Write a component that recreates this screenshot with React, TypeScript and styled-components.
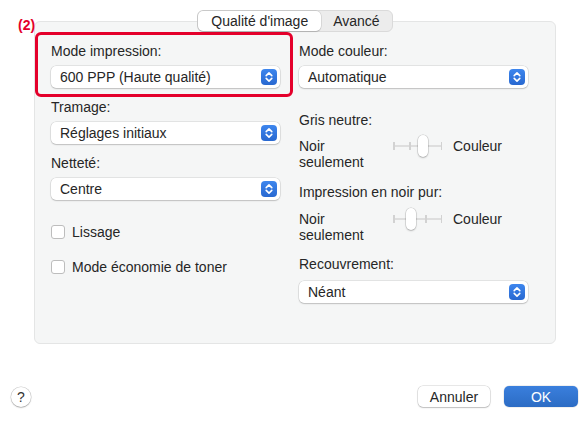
import React from "react";
import styled, { createGlobalStyle } from "styled-components";

const GlobalStyle = createGlobalStyle`
  html, body {
    margin: 0;
    padding: 0;
    background: #fff;
  }
  body {
    font-family: "Liberation Sans", Arial, sans-serif;
    color: #262626;
  }
`;

const Dialog = styled.div`
  position: relative;
  width: 587px;
  height: 422px;
  display: flex;
  flex-direction: column;
`;

const Callout = styled.span`
  position: absolute;
  left: 18px;
  top: 17px;
  font-size: 14px;
  font-weight: bold;
  color: #e4002b;
`;

const TabRow = styled.div`
  display: flex;
  justify-content: center;
  margin: 10px 31px -11px 34px;
  position: relative;
  z-index: 1;
`;

const Tabs = styled.div`
  display: flex;
  background: #ececec;
  border: 1px solid #dadada;
  border-radius: 6px;
  height: 20px;
`;

const Tab = styled.div<{ $active?: boolean }>`
  padding: 0 ${(p) => (p.$active ? 13 : 12)}px;
  font-size: 14px;
  line-height: 20px;
  color: #262626;
  border-radius: 5px;
  background: ${(p) => (p.$active ? "#fff" : "transparent")};
  box-shadow: ${(p) =>
    p.$active ? "0 0 0 0.5px rgba(0,0,0,0.15), 0 1px 1px rgba(0,0,0,0.12)" : "none"};
`;

const Panel = styled.div`
  margin: 0 31px 0 34px;
  height: 323px;
  box-sizing: border-box;
  background: #f5f6f6;
  border: 1px solid #e4e5e5;
  border-radius: 6px;
  padding: 21px 0 0 16px;
  display: grid;
  grid-template-columns: 229px 229px;
  column-gap: 19px;
  align-items: start;
`;

const Column = styled.div`
  display: flex;
  flex-direction: column;
`;

const Field = styled.div<{ $gap?: number }>`
  display: flex;
  flex-direction: column;
  gap: 6px;
  margin-bottom: ${(p) => p.$gap ?? 0}px;
`;

const Highlight = styled(Field)`
  position: relative;
  &::before {
    content: "";
    position: absolute;
    top: -11px;
    left: -16px;
    right: -13px;
    bottom: -9px;
    border: 3px solid #e4002b;
    border-radius: 6px;
    pointer-events: none;
  }
`;

const Label = styled.div<{ $mt?: number }>`
  font-size: 14px;
  line-height: 17px;
  margin-top: ${(p) => p.$mt ?? 0}px;
`;

const SelectBox = styled.div<{ $mt?: number }>`
  height: 22px;
  margin-top: ${(p) => p.$mt ?? 0}px;
  background: #fff;
  border-radius: 5px;
  box-shadow: 0 0 0 0.5px rgba(0, 0, 0, 0.14), 0 1px 1.5px rgba(0, 0, 0, 0.16);
  display: flex;
  align-items: center;
  justify-content: space-between;
  padding: 0 3px 0 9px;
  font-size: 14px;
`;

const Stepper = styled.span`
  width: 16px;
  height: 16px;
  border-radius: 4px;
  background: linear-gradient(#3d86ee, #2868d0);
  display: flex;
  align-items: center;
  justify-content: center;
`;

const Checks = styled.div`
  display: flex;
  flex-direction: column;
  gap: 15px;
  margin-top: 22px;
`;

const CheckRow = styled.label`
  display: flex;
  align-items: center;
  height: 20px;
  font-size: 14px;
  gap: 7px;
`;

const Box = styled.span`
  width: 14px;
  height: 14px;
  box-sizing: border-box;
  background: #fff;
  border: 1px solid #bdbdbd;
  border-radius: 3px;
`;

const SliderRow = styled.div<{ $mt: number }>`
  display: flex;
  align-items: flex-start;
  margin-top: ${(p) => p.$mt}px;
  font-size: 14px;
  line-height: 16px;
`;

const SideText = styled.div<{ $w?: number }>`
  width: ${(p) => (p.$w ? `${p.$w}px` : "auto")};
`;

const Slider = styled.div`
  position: relative;
  width: 49px;
  height: 22px;
  margin: -3px 11px 0 0;
`;

const Track = styled.div`
  position: absolute;
  left: 0;
  right: 0;
  top: 10px;
  height: 2px;
  background: #dedede;
`;

const Tick = styled.div`
  position: absolute;
  top: 7px;
  width: 1.5px;
  height: 8px;
  background: #d2d2d2;
`;

const Thumb = styled.div`
  position: absolute;
  top: 0;
  width: 10px;
  height: 22px;
  border-radius: 5px;
  background: #fff;
  box-shadow: 0 0 0 0.5px rgba(0, 0, 0, 0.18), 0 1px 2px rgba(0, 0, 0, 0.2);
`;

const Footer = styled.div`
  display: flex;
  align-items: center;
  margin-top: 42px;
  padding: 0 9px 0 11px;
  gap: 14px;
`;

const Help = styled.button`
  width: 20px;
  height: 20px;
  padding: 0;
  border: none;
  border-radius: 50%;
  background: #fff;
  box-shadow: 0 0 0 0.5px rgba(0, 0, 0, 0.2), 0 1px 1.5px rgba(0, 0, 0, 0.2);
  font-family: inherit;
  font-size: 14px;
  color: #333;
  margin-right: auto;
`;

const Button = styled.button<{ $primary?: boolean }>`
  height: 21px;
  width: ${(p) => (p.$primary ? 74 : 72)}px;
  border: none;
  border-radius: 5px;
  font-family: inherit;
  font-size: 14px;
  color: ${(p) => (p.$primary ? "#fff" : "#262626")};
  background: ${(p) => (p.$primary ? "linear-gradient(#3a7fdd, #2c6cc4)" : "#fff")};
  box-shadow: ${(p) =>
    p.$primary
      ? "0 0 0 0.5px rgba(0,0,0,0.12)"
      : "0 0 0 0.5px rgba(0,0,0,0.18), 0 1px 1.5px rgba(0,0,0,0.18)"};
`;

const Select = ({ value, mt }: { value: string; mt?: number }) => (
  <SelectBox $mt={mt}>
    <span>{value}</span>
    <Stepper>
      <svg width="16" height="16" viewBox="0 0 16 16" fill="none">
        <path d="M5.2 6.6 8 3.9l2.8 2.7M5.2 9.4 8 12.1l2.8-2.7" stroke="#fff" strokeWidth="1.6" strokeLinecap="round" strokeLinejoin="round" />
      </svg>
    </Stepper>
  </SelectBox>
);

const TickSlider = ({ at, mt }: { at: number; mt: number }) => (
  <SliderRow $mt={mt}>
    <SideText $w={94}>
      Noir
      <br />
      seulement
    </SideText>
    <Slider>
      <Track />
      {[0, 16, 32, 47.5].map((x) => (
        <Tick key={x} style={{ left: x }} />
      ))}
      <Thumb style={{ left: at }} />
    </Slider>
    <SideText>Couleur</SideText>
  </SliderRow>
);

export default function App() {
  return (
    <>
      <GlobalStyle />
      <Dialog>
        <Callout>(2)</Callout>
        <TabRow>
          <Tabs>
            <Tab $active>Qualité d'image</Tab>
            <Tab>Avancé</Tab>
          </Tabs>
        </TabRow>
        <Panel>
          <Column>
            <Highlight $gap={11}>
              <Label>Mode impression:</Label>
              <Select value="600 PPP (Haute qualité)" />
            </Highlight>
            <Field $gap={11}>
              <Label>Tramage:</Label>
              <Select value="Réglages initiaux" />
            </Field>
            <Field>
              <Label>Netteté:</Label>
              <Select value="Centre" />
            </Field>
            <Checks>
              <CheckRow>
                <Box />
                Lissage
              </CheckRow>
              <CheckRow>
                <Box />
                Mode économie de toner
              </CheckRow>
            </Checks>
          </Column>
          <Column>
            <Field>
              <Label>Mode couleur:</Label>
              <Select value="Automatique" />
            </Field>
            <Label $mt={24}>Gris neutre:</Label>
            <TickSlider at={25} mt={9} />
            <Label $mt={14}>Impression en noir pur:</Label>
            <TickSlider at={13} mt={10} />
            <Label $mt={13}>Recouvrement:</Label>
            <Select value="Néant" mt={8} />
          </Column>
        </Panel>
        <Footer>
          <Help>?</Help>
          <Button>Annuler</Button>
          <Button $primary>OK</Button>
        </Footer>
      </Dialog>
    </>
  );
}
